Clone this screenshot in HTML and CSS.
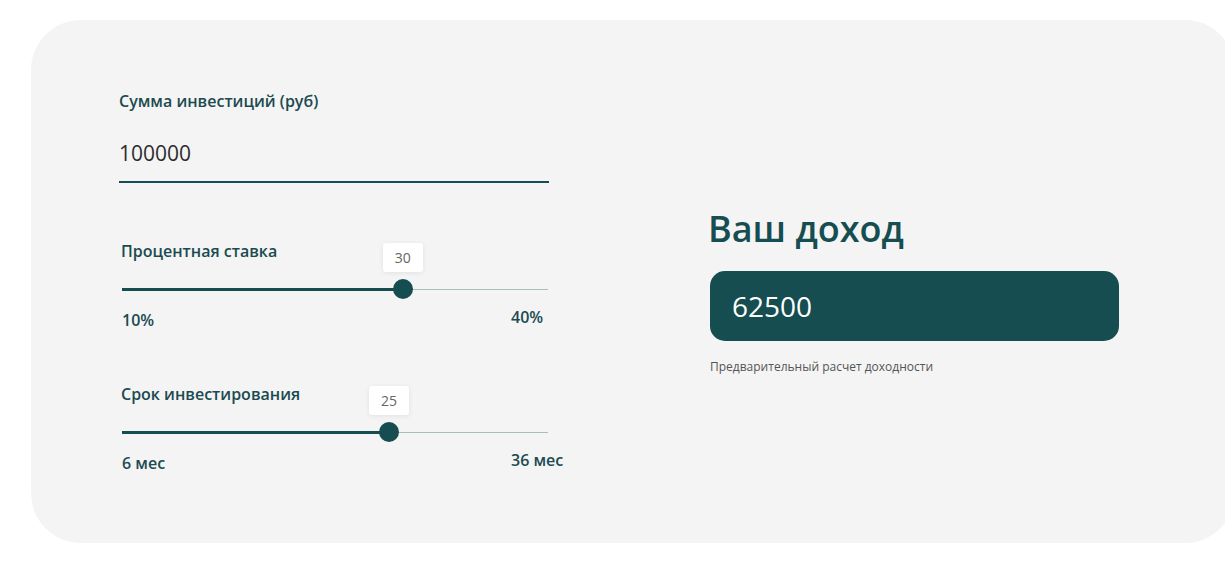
FILE: index.html
```html
<!DOCTYPE html>
<html lang="ru">

<head>
  <meta charset="UTF-8">
  <meta name="viewport" content="width=device-width, initial-scale=1.0">
  <title>Калькулятор доходности</title>
  <link rel="stylesheet" href="styles.css">
</head>

<body>

  <div class="calc">
    <div class="calc-inputs">

      <!-- Сумма -->
      <div class="field">
        <label class="field-label" for="sum">Сумма инвестиций (руб)</label>
        <input class="field-input" type="text" id="sum" value="100000">
      </div>

      <!-- Ставка -->
      <div class="slider-group">
        <div class="field-label">Процентная ставка</div>
        <div class="range" style="--p: 0.6667">
          <div class="range-track"><div class="range-fill"></div></div>
          <div class="range-thumb"><span class="range-tip">30</span></div>
        </div>
        <div class="range-labels">
          <span>10%</span>
          <span class="range-max">40%</span>
        </div>
      </div>

      <!-- Срок -->
      <div class="slider-group">
        <div class="field-label">Срок инвестирования</div>
        <div class="range" style="--p: 0.6333">
          <div class="range-track"><div class="range-fill"></div></div>
          <div class="range-thumb"><span class="range-tip">25</span></div>
        </div>
        <div class="range-labels">
          <span>6 мес</span>
          <span class="range-max">36 мес</span>
        </div>
      </div>

    </div>

    <div class="calc-result">
      <h2>Ваш доход</h2>
      <div class="result-box">62500</div>
      <p class="result-note">Предварительный расчет доходности</p>
    </div>
  </div>

</body>

</html>
```

FILE: styles.css
```css
body {
  margin: 0;
  font-family: "Open Sans", Arial, sans-serif;
  background-color: white;
  overflow: hidden;
}

.calc {
  display: grid;
  grid-template-columns: 441px 410px;
  column-gap: 149px;
  align-items: start;
  box-sizing: border-box;
  width: 1204px;
  height: 523px;
  margin: 20px 0 0 31px;
  padding: 70px 0 0 88px;
  background-color: #f4f4f4;
  border-radius: 50px;
}

.calc-inputs {
  display: flex;
  flex-direction: column;
}

.field-label {
  display: block;
  font-size: 16px;
  line-height: 22px;
  font-weight: 600;
  color: #1b4a50;
}

.field {
  width: 430px;
}

.field-input {
  display: block;
  box-sizing: border-box;
  width: 100%;
  height: 57px;
  margin-top: 14px;
  padding: 0 0 2px;
  font-family: inherit;
  font-size: 21px;
  color: #2c2c2c;
  background: transparent;
  border: none;
  border-bottom: 2px solid #154d51;
  outline: none;
}

.slider-group {
  margin-top: 57px;
  padding-left: 2px;
}

.slider-group + .slider-group {
  margin-top: 52px;
}

.range {
  position: relative;
  display: flex;
  align-items: center;
  width: 426px;
  height: 20px;
  margin-top: 17px;
  margin-left: 1px;
}

.range-track {
  flex: 1;
  height: 1px;
  background-color: #a9bdbe;
  display: flex;
  align-items: center;
}

.range-fill {
  width: calc(10px + var(--p) * (100% - 20px));
  height: 3px;
  background-color: #154d51;
}

.range-thumb {
  position: absolute;
  top: 0;
  left: calc(var(--p) * (100% - 20px));
  width: 20px;
  height: 20px;
  border-radius: 50%;
  background-color: #154d51;
}

.range-tip {
  position: absolute;
  bottom: calc(100% + 7px);
  left: 50%;
  transform: translateX(-50%);
  width: 40px;
  height: 29px;
  line-height: 29px;
  text-align: center;
  font-size: 14px;
  color: #666;
  background: white;
  border-radius: 3px;
  box-shadow: 0 1px 5px rgba(0, 0, 0, 0.08);
}

.range-labels {
  display: flex;
  justify-content: space-between;
  align-items: flex-start;
  width: 442px;
  margin-top: 10px;
  padding-left: 1px;
  font-size: 16px;
  line-height: 22px;
  font-weight: 600;
  color: #1b4a50;
}

.range-max {
  min-width: 53px;
  margin-top: -3px;
}

.calc-result {
  margin-top: 117px;
}

.calc-result h2 {
  margin: 0 0 0 -1px;
  font-size: 36px;
  line-height: 44px;
  font-weight: 600;
  color: #154d51;
}

.result-box {
  box-sizing: border-box;
  height: 70px;
  margin: 20px 0 0 1px;
  padding: 0 22px;
  line-height: 70px;
  font-size: 28px;
  color: white;
  background-color: #154d50;
  border-radius: 15px;
}

.result-note {
  margin: 18px 0 0 1px;
  font-size: 12px;
  line-height: 16px;
  color: #555;
}
```
